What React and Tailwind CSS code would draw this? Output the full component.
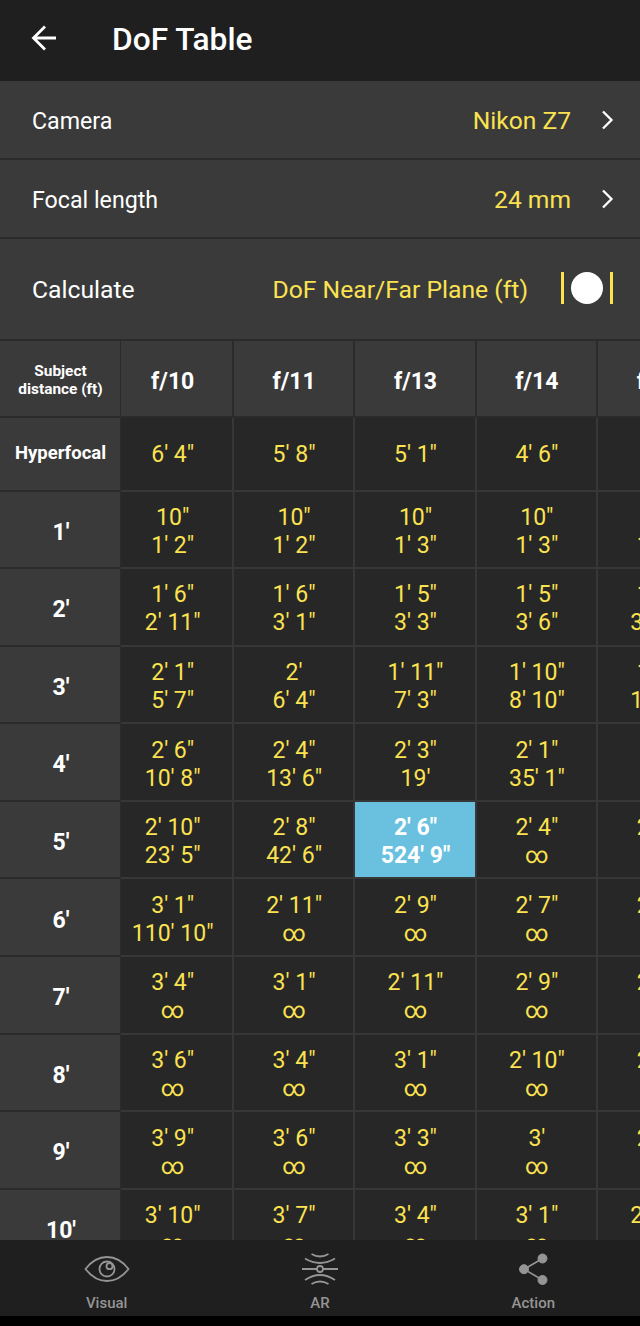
import clsx from "clsx";

const APERTURES = ["f/10", "f/11", "f/13", "f/14", "f/16"];

const HYPERFOCAL = ["6' 4\"", "5' 8\"", "5' 1\"", "4' 6\"", "4'"];

const ROWS = [
  {
    distance: "1'",
    near: ['10"', '10"', '10"', '10"', '10"'],
    far: ["1' 2\"", "1' 2\"", "1' 3\"", "1' 3\"", "1' 4\""],
  },
  {
    distance: "2'",
    near: ["1' 6\"", "1' 6\"", "1' 5\"", "1' 5\"", "1' 4\""],
    far: ["2' 11\"", "3' 1\"", "3' 3\"", "3' 6\"", "3' 10\""],
  },
  {
    distance: "3'",
    near: ["2' 1\"", "2'", "1' 11\"", "1' 10\"", "1' 9\""],
    far: ["5' 7\"", "6' 4\"", "7' 3\"", "8' 10\"", "11' 6\""],
  },
  {
    distance: "4'",
    near: ["2' 6\"", "2' 4\"", "2' 3\"", "2' 1\"", "2'"],
    far: ["10' 8\"", "13' 6\"", "19'", "35' 1\"", "∞"],
  },
  {
    distance: "5'",
    near: ["2' 10\"", "2' 8\"", "2' 6\"", "2' 4\"", "2' 3\""],
    far: ["23' 5\"", "42' 6\"", "524' 9\"", "∞", "∞"],
  },
  {
    distance: "6'",
    near: ["3' 1\"", "2' 11\"", "2' 9\"", "2' 7\"", "2' 5\""],
    far: ["110' 10\"", "∞", "∞", "∞", "∞"],
  },
  {
    distance: "7'",
    near: ["3' 4\"", "3' 1\"", "2' 11\"", "2' 9\"", "2' 7\""],
    far: ["∞", "∞", "∞", "∞", "∞"],
  },
  {
    distance: "8'",
    near: ["3' 6\"", "3' 4\"", "3' 1\"", "2' 10\"", "2' 8\""],
    far: ["∞", "∞", "∞", "∞", "∞"],
  },
  {
    distance: "9'",
    near: ["3' 9\"", "3' 6\"", "3' 3\"", "3'", "2' 9\""],
    far: ["∞", "∞", "∞", "∞", "∞"],
  },
  {
    distance: "10'",
    near: ["3' 10\"", "3' 7\"", "3' 4\"", "3' 1\"", "2' 10\""],
    far: ["∞", "∞", "∞", "∞", "∞"],
  },
];

const SELECTED = { distance: "5'", column: 2 };

function App() {
  return (
    <main className="flex h-[1326px] w-[640px] flex-col overflow-hidden bg-black font-['Roboto',sans-serif] text-white">
      <header className="flex h-[81px] shrink-0 items-center bg-[#1f1f1f] pb-[5px] pl-[31px]">
        <BackIcon />

        <h1 className="mt-[3px] ml-[55px] text-[31.7px] leading-10 font-medium">
          DoF Table
        </h1>
      </header>

      <section className="shrink-0 bg-[#3a3a3a]">
        <SettingRow label="Camera" value="Nikon Z7" />
        <SettingRow label="Focal length" value="24 mm" />

        <div className="flex h-[102px] items-center border-b-2 border-[#2b2b2b] pt-px pr-[27px] pl-8 text-[24.7px]">
          <span>Calculate</span>

          <span className="ml-auto text-[#fbe250]">
            DoF Near/Far Plane (ft)
          </span>

          <div className="mb-1 ml-[33px] flex items-center gap-[7px]">
            <span className="h-8 w-[3px] bg-[#fbe250]" />
            <span className="size-8 rounded-full bg-white" />
            <span className="h-8 w-[3px] bg-[#fbe250]" />
          </div>
        </div>
      </section>

      <DofTable />

      <nav className="grid h-[76px] shrink-0 grid-cols-3 bg-[#1f1f1f] text-[15px] font-medium text-[#959595]">
        <NavItem label="Visual" icon={<EyeIcon />} />
        <NavItem label="AR" icon={<ArIcon />} />
        <NavItem label="Action" icon={<ShareIcon />} />
      </nav>

      <div className="h-2.5 shrink-0 bg-black" />
    </main>
  );
}

function SettingRow({ label, value }) {
  return (
    <div className="flex h-[79px] items-center border-b-2 border-[#2b2b2b] pt-1 pr-[26px] pl-8">
      <span className="text-[23.2px]">{label}</span>

      <span className="ml-auto text-[24.6px] text-[#fbe250]">
        {value}
      </span>

      <svg
        className="mb-1 ml-[29px] h-5 w-[14px]"
        viewBox="0 0 14 20"
        fill="none"
        stroke="currentColor"
        strokeWidth="2.3"
      >
        <path d="M3 1.5 11.5 10 3 18.5" />
      </svg>
    </div>
  );
}

function DofTable() {
  return (
    <section className="flex min-h-0 flex-1 overflow-hidden bg-[#272727]">
      <div className="w-[120px] shrink-0 bg-[#3a3a3a] text-center font-bold">
        <div className="flex h-[77px] items-center justify-center border-b-2 border-[#2b2b2b] pt-[3px] pl-px text-[15.4px] leading-[18px] font-bold">
          Subject
          <br />
          distance (ft)
        </div>

        <div className="flex h-[73.5px] items-center justify-center border-b-2 border-[#2b2b2b] pl-px text-[18.5px]">
          Hyperfocal
        </div>

        {ROWS.map((row) => (
          <div
            key={row.distance}
            className="flex h-[77.6px] items-center justify-center border-b-2 border-[#2b2b2b] pt-[7px] pl-0.5 text-[23px]"
          >
            {row.distance}
          </div>
        ))}
      </div>

      <div className="min-w-0 flex-1 overflow-hidden border-l border-[#2b2b2b]">
        <div className="-ml-[8.5px] w-[607px] text-center text-[23px] leading-7">
          <div className="grid h-[77px] grid-cols-5 bg-[#3a3a3a] font-bold">
            {APERTURES.map((aperture) => (
              <div
                key={aperture}
                className="flex items-center justify-center border-r-2 border-b-2 border-[#2b2b2b] pt-1.5 pl-px"
              >
                {aperture}
              </div>
            ))}
          </div>

          <div className="grid h-[73.5px] grid-cols-5 text-[#fbe250]">
            {HYPERFOCAL.map((value) => (
              <div
                key={value}
                className="flex items-center justify-center border-r-2 border-b-2 border-[#373737] pt-0.5 pl-px"
              >
                {value}
              </div>
            ))}
          </div>

          {ROWS.map((row) => (
            <div
              key={row.distance}
              className="grid h-[77.6px] grid-cols-5"
            >
              {APERTURES.map((aperture, column) => (
                <DofCell
                  key={aperture}
                  near={row.near[column]}
                  far={row.far[column]}
                  selected={
                    row.distance === SELECTED.distance &&
                    column === SELECTED.column
                  }
                />
              ))}
            </div>
          ))}
        </div>
      </div>
    </section>
  );
}

function DofCell({ near, far, selected }) {
  return (
    <div
      className={clsx(
        "flex flex-col justify-center border-r-2 border-b-2 border-[#373737] pt-[5px] pl-px",
        selected
          ? "bg-[#69c0df] font-bold text-white"
          : "text-[#fbe250]"
      )}
    >
      <span>{near}</span>
      <span>{far}</span>
    </div>
  );
}

function NavItem({ label, icon }) {
  return (
    <div className="flex flex-col items-center pt-3">
      {icon}
      <span className="mt-1.5">{label}</span>
    </div>
  );
}

function BackIcon() {
  return (
    <svg
      className="h-[26px] w-[26px]"
      viewBox="0 0 26 26"
      fill="none"
      stroke="currentColor"
      strokeWidth="2.8"
    >
      <path d="M25 13H2.5M14 1.5 2.5 13 14 24.5" />
    </svg>
  );
}

function EyeIcon() {
  return (
    <svg
      className="h-[34px] w-[46px]"
      viewBox="0 0 46 34"
      fill="none"
      stroke="currentColor"
      strokeWidth="1.8"
    >
      <path d="M1.5 17C8 8.5 15 5 23 5s15 3.5 21.5 12C38 25.5 31 29 23 29S8 25.5 1.5 17Z" />
      <circle cx="23" cy="17" r="7.5" />
      <circle cx="25.5" cy="14.2" r="3" />
    </svg>
  );
}

function ArIcon() {
  return (
    <svg
      className="h-[34px] w-[38px]"
      viewBox="0 0 38 34"
      fill="none"
      stroke="currentColor"
      strokeWidth="1.8"
    >
      <path d="M1 17h15M22 17h15" />
      <circle cx="19" cy="17" r="3" />
      <path d="M4 6.500q15 9 30 0M10.500 2q8.500 5 17 0" />
      <path d="M4 28q15-10 30 0M10.500 32q8.500-5 17 0" />
    </svg>
  );
}

function ShareIcon() {
  return (
    <svg
      className="h-[34px] w-[30px]"
      viewBox="0 0 30 34"
      fill="currentColor"
      stroke="currentColor"
    >
      <path d="M24.500 6.500 6 17.200 24.500 28" fill="none" strokeWidth="1.6" />
      <circle cx="24.5" cy="6.5" r="4.5" />
      <circle cx="6" cy="17.2" r="4.5" />
      <circle cx="24.5" cy="28" r="4.5" />
    </svg>
  );
}

export default App;
